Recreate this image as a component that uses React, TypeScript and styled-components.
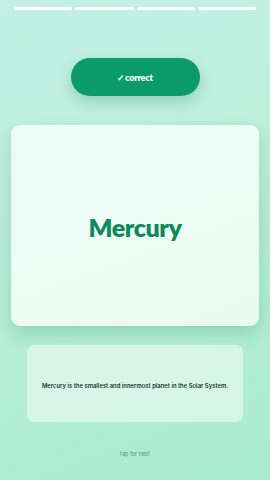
import React from 'react';
import styled, { createGlobalStyle } from 'styled-components';

const GlobalStyle = createGlobalStyle`
  html, body {
    margin: 0;
    padding: 0;
    width: 100%;
    height: 100%;
  }
  #root {
    height: 100%;
  }
`;

const Screen = styled.div`
  width: 270px;
  height: 480px;
  box-sizing: border-box;
  padding: 7px 11px 0;
  display: flex;
  flex-direction: column;
  align-items: center;
  background: linear-gradient(160deg, #c3efe4 0%, #bff0df 30%, #b4edd6 65%, #a9eccf 100%);
  font-family: Inter, 'Noto Sans', sans-serif;
  overflow: hidden;
`;

const Progress = styled.div`
  width: 100%;
  padding: 0 3px;
  box-sizing: border-box;
  display: grid;
  grid-template-columns: repeat(4, 1fr);
  gap: 3px;
`;

const Segment = styled.div<{ $done: boolean }>`
  height: 3px;
  border-radius: 2px;
  background: ${({ $done }) => ($done ? '#ffffff' : 'rgba(255,255,255,0.5)')};
`;

const Verdict = styled.div`
  margin-top: 48px;
  width: 129px;
  height: 38px;
  border-radius: 19px;
  background: #0b9a69;
  color: #ffffff;
  display: flex;
  align-items: center;
  justify-content: center;
  font-family: Lato, sans-serif;
  font-weight: 800;
  font-size: 9px;
  letter-spacing: -0.2px;
  box-shadow: 0 6px 14px rgba(10, 120, 80, 0.25);
`;

const Card = styled.div`
  margin-top: 29px;
  width: 248px;
  height: 201px;
  border-radius: 9px;
  background: linear-gradient(160deg, #eefcf7 0%, #eafaf2 100%);
  display: flex;
  align-items: center;
  justify-content: center;
  box-shadow: 0 8px 18px rgba(20, 120, 90, 0.22);
`;

const Term = styled.div`
  color: #0d8a5d;
  font-family: Lato, sans-serif;
  font-weight: 800;
  font-size: 25px;
  letter-spacing: -0.4px;
  margin-top: 2px;
`;

const Definition = styled.div`
  margin-top: 19px;
  width: 216px;
  height: 77px;
  border-radius: 7px;
  background: rgba(240, 252, 246, 0.6);
  display: flex;
  align-items: center;
  justify-content: center;
  padding: 4px 0 0;
  box-sizing: border-box;
  text-align: center;
  white-space: nowrap;
  color: #1e3a30;
  font-size: 5.9px;
  font-weight: 600;
`;

const Hint = styled.div`
  margin-top: 29px;
  font-size: 5.5px;
  color: #5f8f7d;
`;

export default function App() {
  const steps = [true, true, true, true];
  return (
    <>
      <GlobalStyle />
      <Screen>
        <Progress>
          {steps.map((done, i) => (
            <Segment key={i} $done={done} />
          ))}
        </Progress>
        <Verdict>✓correct</Verdict>
        <Card>
          <Term>Mercury</Term>
        </Card>
        <Definition>Mercury is the smallest and innermost planet in the Solar System.</Definition>
        <Hint>tap for next</Hint>
      </Screen>
    </>
  );
}
